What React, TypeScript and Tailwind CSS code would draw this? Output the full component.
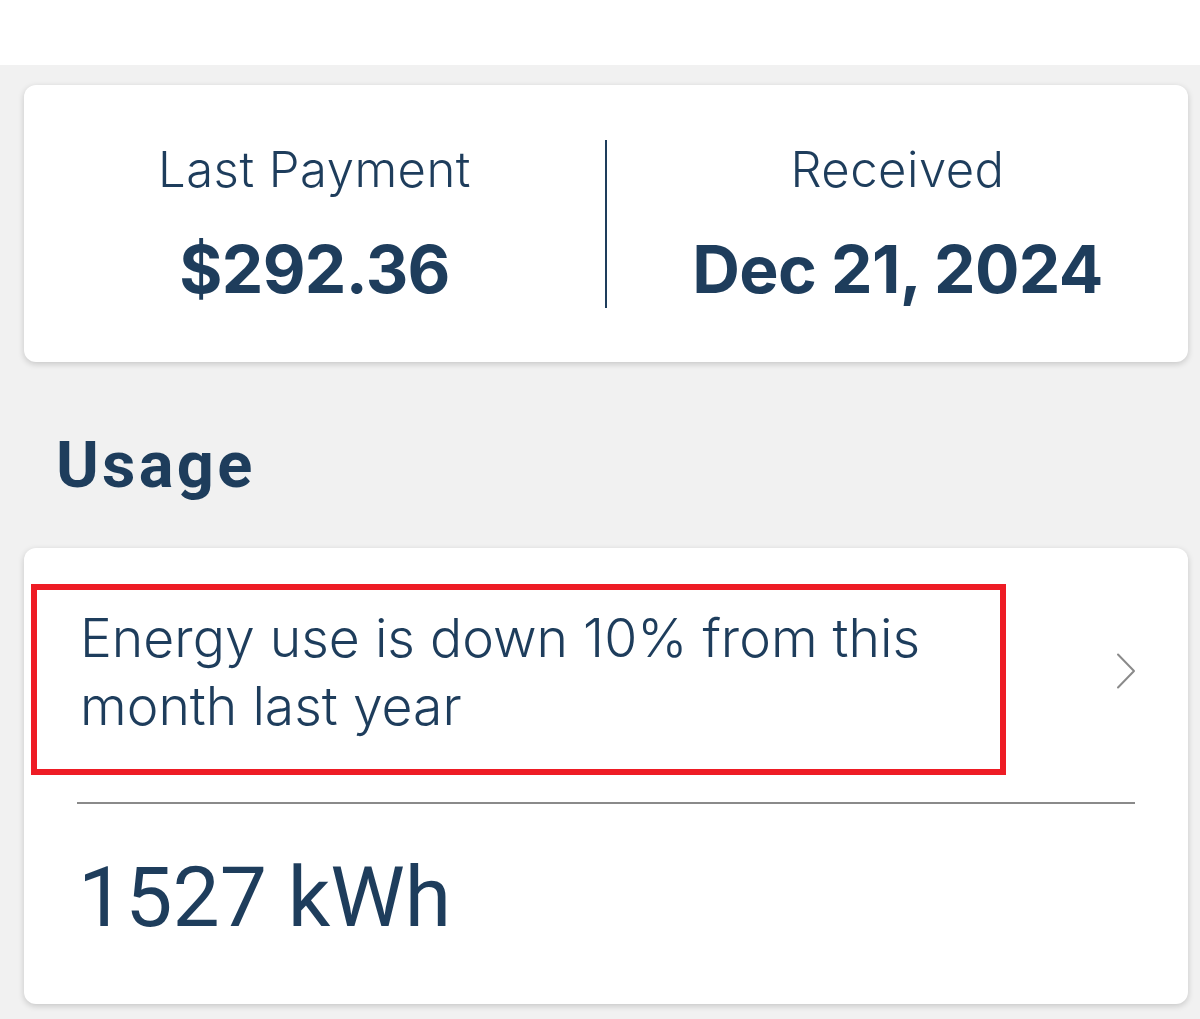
const NAVY = "text-[#1e3d5c]";

function StatColumn({ label, value }: { label: string; value: string }) {
  return (
    <div className="flex flex-1 flex-col items-center justify-center gap-[42px]">
      <span className={`font-['Inter',sans-serif] text-[49px] font-[350] leading-none tracking-[0.01em] ${NAVY}`}>
        {label}
      </span>
      <span className={`font-['Inter',sans-serif] text-[66px] font-bold leading-none tracking-[-0.01em] ${NAVY}`}>
        {value}
      </span>
    </div>
  );
}

function Chevron() {
  return (
    <svg width="20" height="36" viewBox="0 0 20 36" fill="none" className="ml-auto mb-[18px] shrink-0">
      <polyline points="2,1.5 18,18 2,34.5" stroke="#8a8a8a" strokeWidth="2" strokeLinecap="round" strokeLinejoin="round" />
    </svg>
  );
}

export default function App() {
  return (
    <div className="min-h-[1019px] bg-[#f1f1f1]">
      {/* header strip */}
      <div className="h-[65px] bg-white" />

      <div className="pl-[24px] pr-[12px] pt-[20px] pb-[14px]">
        {/* last payment */}
        <div className="flex h-[277px] items-center rounded-[12px] bg-white shadow-[0_2px_6px_rgba(0,0,0,0.18)]">
          <StatColumn label="Last Payment" value="$292.36" />
          <div className="h-[168px] w-[2px] bg-[#1e3d5c]" />
          <StatColumn label="Received" value="Dec 21, 2024" />
        </div>

        <h2 className={`ml-[32px] mt-[71px] font-['Roboto',sans-serif] text-[65px] font-bold leading-none tracking-[0.05em] ${NAVY}`}>
          Usage
        </h2>

        {/* usage card */}
        <div className="mt-[50px] rounded-[12px] bg-white pt-[36px] pb-[64px] shadow-[0_2px_6px_rgba(0,0,0,0.18)]">
          <div className="flex items-center pl-[7px] pr-[52px]">
            <div className="w-[975px] border-[6px] border-[#ee1c25] pt-[14px] pb-[29px] pl-[43px] pr-[30px]">
              <p className={`font-['Inter',sans-serif] text-[53.5px] font-[350] leading-[68px] ${NAVY}`}>
                Energy use is down 10% from this month last year
              </p>
            </div>
            <Chevron />
          </div>

          <div className="mx-[53px] mt-[27px] h-[2px] bg-[#8a8a8a]" />

          <p className={`ml-[54px] mt-[52px] font-['Roboto',sans-serif] text-[84px] font-normal leading-none ${NAVY}`}>
            1527 kWh
          </p>
        </div>
      </div>
    </div>
  );
}
